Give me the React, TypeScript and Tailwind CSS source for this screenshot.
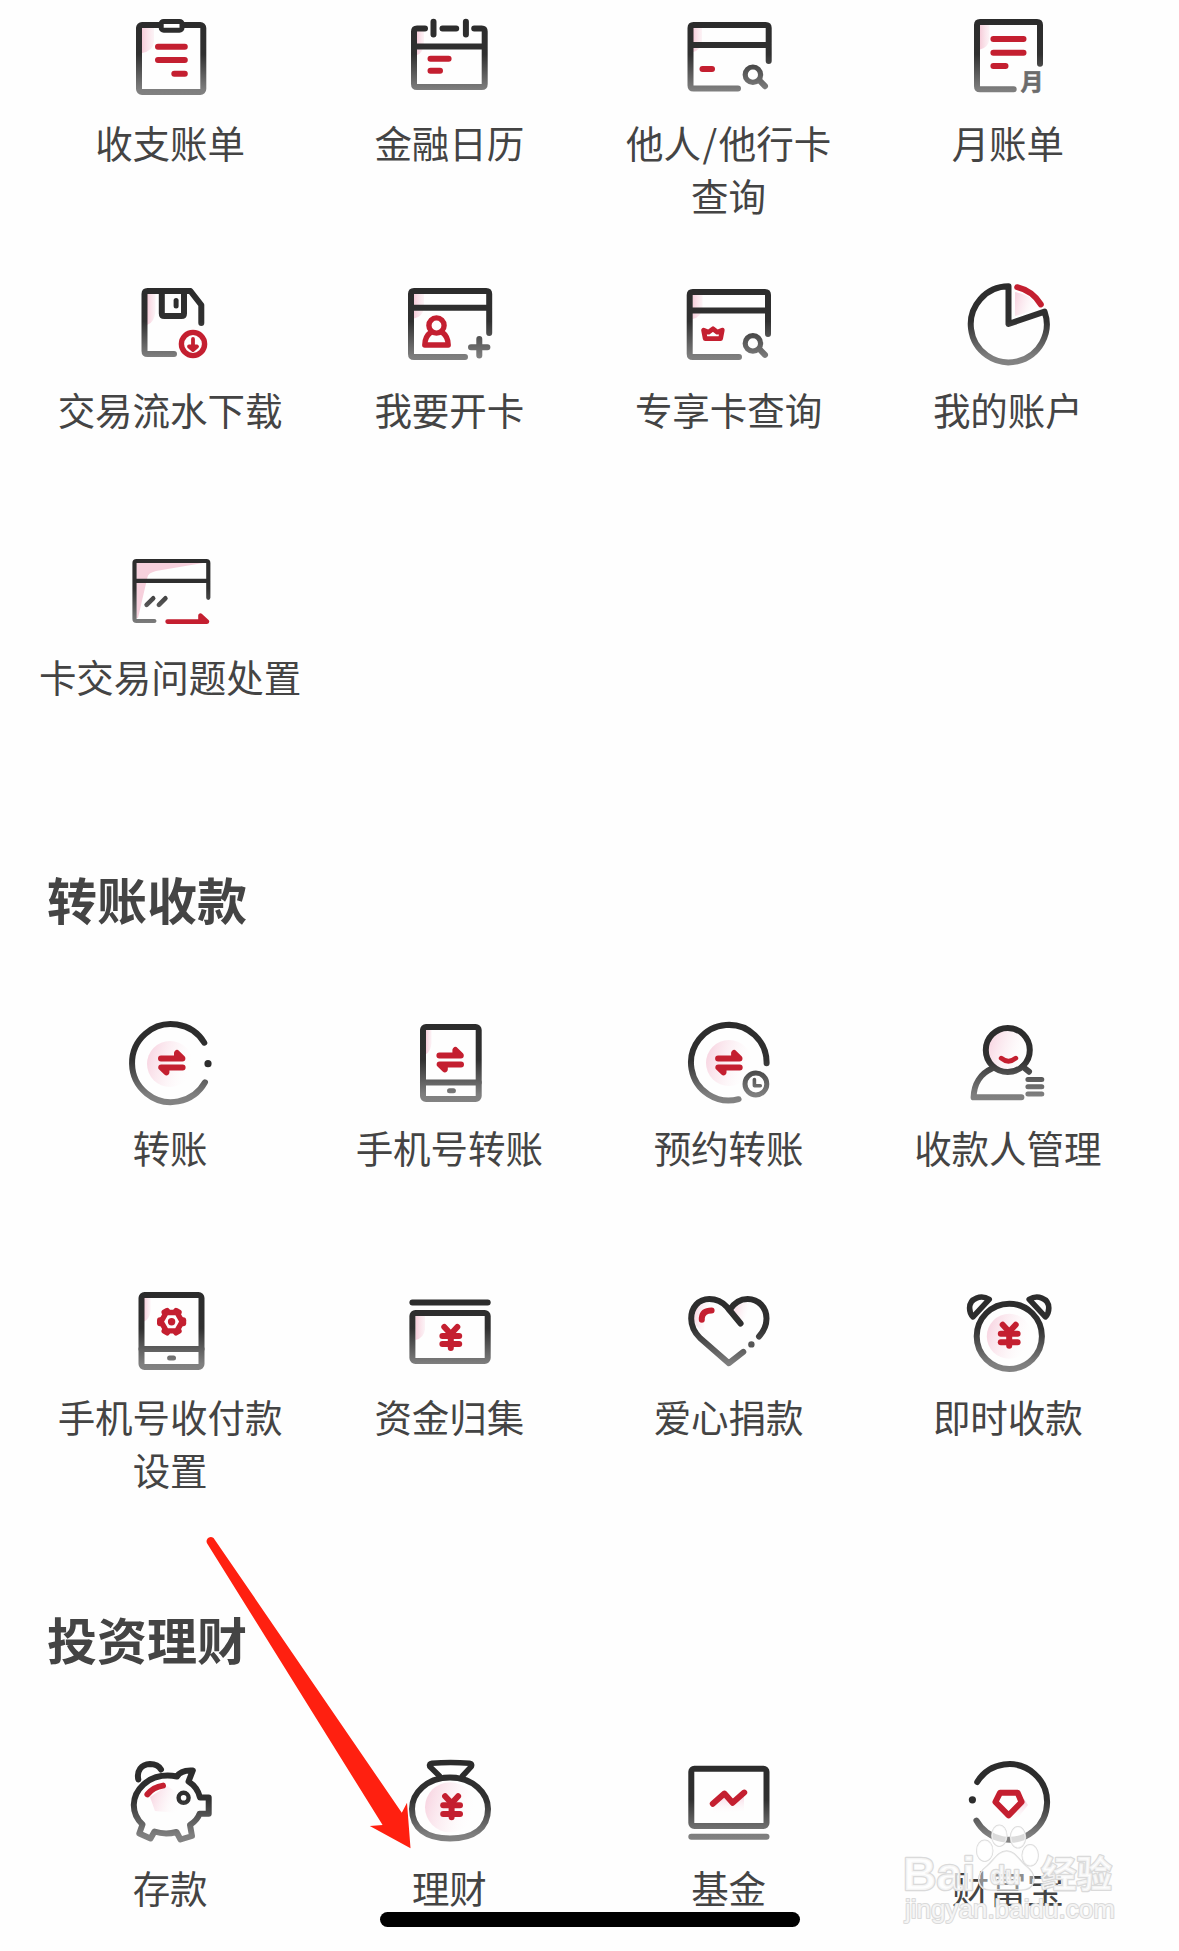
import type { ReactNode } from "react";

const INK = "url(#ink)";
const RED = "#c41f30";

function SharedDefs() {
  return (
    <svg className="absolute h-0 w-0" aria-hidden="true">
      <defs>
        <linearGradient id="ink" gradientUnits="userSpaceOnUse" x1="0" y1="10" x2="0" y2="90">
          <stop offset="0" stopColor="#2b2b2b" />
          <stop offset="0.48" stopColor="#303030" />
          <stop offset="0.92" stopColor="#7e7e7e" />
          <stop offset="1" stopColor="#828282" />
        </linearGradient>
        <linearGradient id="blush" x1="0" y1="0" x2="1" y2="0">
          <stop offset="0" stopColor="#f5c3d3" stopOpacity="0.85" />
          <stop offset="1" stopColor="#f9dde6" stopOpacity="0.35" />
        </linearGradient>
        <linearGradient id="glow" x1="0" y1="0.3" x2="1" y2="0.6">
          <stop offset="0" stopColor="#f3b6cc" stopOpacity="0.58" />
          <stop offset="0.5" stopColor="#f9d5e1" stopOpacity="0.28" />
          <stop offset="1" stopColor="#ffffff" stopOpacity="0" />
        </linearGradient>
        <linearGradient id="drop" x1="0" y1="0" x2="0" y2="1">
          <stop offset="0" stopColor="#f3b6cc" stopOpacity="0.7" />
          <stop offset="1" stopColor="#ffffff" stopOpacity="0" />
        </linearGradient>
      </defs>
    </svg>
  );
}

function Icon({ children, width = 6 }: { children: ReactNode; width?: number }) {
  return (
    <svg
      viewBox="0 0 100 100"
      className="h-[100px] w-[100px] shrink-0"
      fill="none"
      stroke={INK}
      strokeWidth={width}
      strokeLinecap="round"
      strokeLinejoin="round"
    >
      {children}
    </svg>
  );
}

/* Soft pink shade in the upper left corner of a framed icon */
function Corner({ x, y, r, b }: { x: number; y: number; r: number; b: number }) {
  return (
    <path
      d={`M${x} ${y}H${r}V${y + (b - y) * 0.55}Q${r - 1} ${b - 2} ${x} ${b}Z`}
      fill="url(#blush)"
      stroke="none"
    />
  );
}

/* Pair of opposite half arrows */
function Swap({ dx = 0, dy = 0 }: { dx?: number; dy?: number }) {
  return (
    <g transform={`translate(${dx} ${dy})`} stroke={RED} fill={RED}>
      <path d="M40 47.4H61.4L56 42V47.4" />
      <path d="M61.6 56.4H40.2L45.4 61.4V56.4" />
    </g>
  );
}

function Yuan({ dx = 0, dy = 0, gap = 8 }: { dx?: number; dy?: number; gap?: number }) {
  return (
    <g transform={`translate(${dx} ${dy})`} stroke={RED}>
      <path d="M44.3 47L50.8 54L57.3 47M50.8 54V68" />
      <path d="M42.4 56H59.2" />
      <path d={`M42.4 ${56 + gap}H59.2`} />
    </g>
  );
}

function Lens({ dy = 0 }: { dy?: number }) {
  return (
    <g transform={`translate(0 ${dy})`}>
      <circle cx="73.9" cy="68.7" r="7.7" strokeWidth="5.2" />
      <path d="M80.5 74.5L86 80.2" />
    </g>
  );
}

const icons = {
  bill: (
    <Icon>
      <Corner x={21} y={22} r={33} b={47} />
      <rect x="18" y="19" width="64.3" height="67" rx="3" />
      <rect x="40.2" y="15.4" width="20.8" height="8.8" rx="2.5" fill="#fff" strokeWidth="5" />
      <path stroke={RED} d="M37 40.7H63.8M37 54H63.8M53.3 67.7H63.8" />
    </Icon>
  ),
  calendar: (
    <Icon>
      <Corner x={17} y={25} r={24} b={49} />
      <path d="M25 22.4H17Q14 22.4 14 25.4V78Q14 81 17 81H81.7Q84.7 81 84.7 78V25.4Q84.7 22.4 81.7 22.4H74.2M42.5 22.4H56.2M33.5 15.8V28.6M65.9 15.8V28.6M14 40.4H84.7" />
      <path stroke={RED} d="M30.5 52.7H48.6M30.5 64.7H40" />
    </Icon>
  ),
  cardSearch: (
    <Icon>
      <Corner x={14} y={22} r={23} b={46} />
      <path d="M89.7 55V22Q89.7 19 86.7 19H14.5Q11.5 19 11.5 22V79.5Q11.5 82.5 14.5 82.5H59M11.5 39H89.7" />
      <path stroke={RED} d="M23.5 63H33" />
      <Lens />
    </Icon>
  ),
  monthBill: (
    <Icon>
      <Corner x={22} y={19} r={31.5} b={43.5} />
      <path d="M82 57.7V19Q82 16 79 16H22Q19 16 19 19V80.3Q19 83.3 22 83.3H55.7" />
      <path stroke={RED} d="M35.4 33H65.5M35.4 46.7H65.5M35.4 60H47.5" />
      <text
        x="74"
        y="83.8"
        textAnchor="middle"
        fontSize="23"
        fontWeight="700"
        fill="#6c6c6c"
        stroke="#6c6c6c"
        strokeWidth="0.6"
        className="font-['Noto_Sans_CJK_SC',sans-serif]"
      >
        月
      </text>
    </Icon>
  ),
  save: (
    <Icon>
      <Corner x={26} y={21} r={34.5} b={52} />
      <path d="M53 81H26.5Q23.5 81 23.5 78V21Q23.5 18 26.5 18H69.4L80.3 32V50M40.8 18V40.5Q40.8 43 43.3 43H60.5Q63 43 63 40.5V18" />
      <path strokeWidth="5" d="M55.1 27.5V33" />
      <circle cx="72" cy="71" r="11.6" stroke={RED} strokeWidth="5.4" />
      <path stroke={RED} fill={RED} strokeWidth="3.8" d="M72 66V76.5M68 73.5L72 77L76 73.5Z" />
    </Icon>
  ),
  openCard: (
    <Icon>
      <Corner x={14} y={21} r={24} b={45.5} />
      <path d="M89.2 60V21Q89.2 18 86.2 18H14Q11 18 11 21V81Q11 84 14 84H65M11 34.7H89.2" />
      <g stroke={RED} strokeWidth="5.4">
        <circle cx="36.5" cy="52.5" r="7.6" />
        <path d="M30.5 59.5C26.5 62.5 24.8 67 24.8 72H48.2C48.2 67 46.5 62.5 42.5 59.5" />
      </g>
      <path d="M71 74.3H87.4M79.3 66V82.4" />
    </Icon>
  ),
  vipCard: (
    <Icon>
      <Corner x={13.5} y={22} r={23.5} b={46} />
      <path d="M89 61V22Q89 19 86 19H13.7Q10.7 19 10.7 22V81Q10.7 84 13.7 84H60M10.7 37.4H89" />
      <path stroke={RED} strokeWidth="4.8" d="M24.6 57.2L26.2 65.6H41.6L43.2 57.2L38.2 59.2L34 55.8L29.6 59.2Z" />
      <Lens dy={1.7} />
    </Icon>
  ),
  pie: (
    <Icon>
      <path d="M57 19Q72 21 80.5 33Q70 40 57 43Z" fill="url(#glow)" stroke="none" />
      <path d="M50.5 13.3A38 38 0 1 0 86.6 38.7L50.5 51Z" />
      <path stroke={RED} d="M59.2 14.2A38 38 0 0 1 82.8 31.4" />
    </Icon>
  ),
  cardIssue: (
    <Icon width={4.2}>
      <path d="M15.4 23H82L35 31Q27 33 26.5 37L17 78H15.4Z" fill="#f6d0dc" stroke="none" />
      <path d="M87.3 57.8V23Q87.3 21 85.3 21H15.5Q13.5 21 13.5 23V79Q13.5 81 15.5 81H33.4M13.5 40.8H87.3" />
      <path strokeWidth="4.6" d="M25.6 64.8L32.2 58.3M37.9 64.8L44.4 58.3" />
      <path stroke={RED} fill={RED} strokeWidth="4.6" d="M46.6 81.6H86L79.5 75.6V81.6" />
    </Icon>
  ),
  transfer: (
    <Icon>
      <circle cx="49" cy="53" r="23" fill="url(#glow)" stroke="none" />
      <path d="M83.3 31.7A39 39 0 1 0 84 71.3" />
      <circle cx="87" cy="52.7" r="3.6" fill="#2d2d2d" stroke="none" />
      <Swap />
    </Icon>
  ),
  phoneTransfer: (
    <Icon>
      <Corner x={26} y={19} r={31.5} b={43} />
      <rect x="23" y="16" width="55.7" height="72" rx="3" />
      <path d="M23 71.4H78.7" />
      <path strokeWidth="5" d="M49.5 79.7H53.4" />
      <Swap dx={-0.6} dy={-3} />
    </Icon>
  ),
  scheduled: (
    <Icon>
      <circle cx="50" cy="52" r="23" fill="url(#glow)" stroke="none" />
      <path d="M87.6 52.3A37.8 37.8 0 1 0 59.6 88.2" />
      <circle cx="76.9" cy="73" r="10.9" strokeWidth="5" />
      <path strokeWidth="3.6" d="M75.4 68.6V74.7H81.3" />
      <Swap dx={-0.9} />
    </Icon>
  ),
  payee: (
    <Icon>
      <circle cx="49.8" cy="39" r="20" fill="url(#glow)" stroke="none" />
      <circle cx="49.8" cy="39" r="22" />
      <path d="M34 57.5C22.5 62.5 16 73 15.6 86.3H63.4M64.5 55.5L71 60.7" />
      <path stroke={RED} strokeWidth="4.8" d="M43.2 47.2Q50.4 53.2 57.8 47.2" />
      <path strokeWidth="5" d="M69.9 68.4H83.8M69.9 75.7H83.8M69.9 83H83.8" />
    </Icon>
  ),
  phoneSettings: (
    <Icon>
      <Corner x={23} y={18} r={29.5} b={41.5} />
      <rect x="20.5" y="15" width="60" height="72" rx="3" />
      <path d="M20.5 69H80.5" />
      <path strokeWidth="5" d="M48.6 78H52.5" />
      <g fill={RED} stroke="none">
        {[0, 60, 120, 180, 240, 300].map((a) => (
          <rect key={a} x="58.6" y="37.2" width="6.6" height="9" rx="3" transform={`rotate(${a} 50.6 41.7)`} />
        ))}
        <circle cx="50.6" cy="41.7" r="3.7" />
      </g>
      <path stroke={RED} strokeWidth="5.4" d="M55.9 32.5L61.2 41.7L55.9 50.9H45.3L40 41.7L45.3 32.5Z" />
    </Icon>
  ),
  collect: (
    <Icon>
      <Corner x={15.5} y={36} r={25} b={60} />
      <path d="M12.4 22.4H87.7" />
      <rect x="12.4" y="33" width="75.3" height="48" rx="3" />
      <Yuan />
    </Icon>
  ),
  heart: (
    <Icon>
      <path d="M54 31Q60 22 71 22Q70 34 63 42Z" fill="url(#glow)" stroke="none" />
      <path d="M15 38Q16 23 31 22Q26 30 25 52Q15 47 15 38Z" fill="url(#glow)" stroke="none" />
      <path d="M61.6 43.5L48 27C43 21.5 37 19 30.3 19C19.5 19 12.2 27.5 12.2 38.5C12.2 46.5 15.5 52.5 21 58L49.9 83.2L64.3 71.8" />
      <path d="M50.6 30C55 23 61 19 68.7 19C79.5 19 87.5 27.5 87.5 38.5C87.5 45.5 84.5 51.5 80 56.5" />
      <circle cx="72.4" cy="64.4" r="3.2" fill="#565656" stroke="none" />
      <path stroke={RED} d="M22.8 39.8V38Q23.5 30.4 32.6 30.4" />
    </Icon>
  ),
  alarm: (
    <Icon>
      <circle cx="51.3" cy="56.3" r="22.5" fill="url(#glow)" stroke="none" />
      <circle cx="51.3" cy="56.3" r="32.6" />
      <path strokeWidth="5.6" d="M31.2 19.4C23.5 14.5 11.6 17.8 11.6 28C11.6 32 13 35 15 36.8Z" />
      <path strokeWidth="5.6" d="M71.2 19.4C79 14.5 90.8 17.8 90.8 28C90.8 32 89.4 35 87.4 36.8Z" />
      <Yuan dx={0.4} dy={-2.2} gap={8.4} />
    </Icon>
  ),
  pig: (
    <Icon>
      <path d="M29 46L46 35L60 44L56 62L34 60Z" fill="url(#glow)" stroke="none" />
      <path d="M17.3 28.5C15.5 20 20 13.5 29 13C34 13 38 15 40 18.5" />
      <path d="M56 25.5C45 23.5 32 25 22.5 33.5C10 45 9.5 62 21.5 73.5L18.3 82.5L29.5 87.5L33.5 80.5C41 83 48 83 55.5 81L59.5 88.5L71 85L69 74C74 70.5 77 67.5 78.5 62.8H87.7V46.5H79C77.5 40 73 34 67.5 30.5L71.8 19.5C64 19 58.5 21 56 25.5Z" />
      <circle cx="62.6" cy="46.8" r="5" strokeWidth="4.4" />
      <path stroke={RED} d="M26.4 43.4C30 38.8 36 35.4 42 34.6" />
    </Icon>
  ),
  bag: (
    <Icon>
      <circle cx="50" cy="56.3" r="25" fill="url(#glow)" stroke="none" />
      <path d="M50 26.5C73 26.5 88 42 88 58C88 77 74 87.5 50 87.5C26 87.5 12 77 12 58C12 42 27 26.5 50 26.5Z" />
      <path strokeWidth="5.6" d="M39.5 25L29.8 15.4Q29 12.6 32 12.2C44 11.2 57 11.2 69.5 12.2Q72.4 12.6 71.4 15.4L62.5 25" />
      <Yuan dx={0.8} dy={-1.8} gap={8.8} />
    </Icon>
  ),
  fund: (
    <Icon>
      <path d="M34 54L45 45L54 54L65 43V60L34 63Z" fill="url(#drop)" stroke="none" />
      <rect x="12.3" y="17.7" width="75.2" height="57.3" rx="3" />
      <path d="M12.3 85.7H87.5" />
      <path stroke={RED} d="M33.8 52.8L45.4 42.6L53.6 51.8L65.2 41.6" />
    </Icon>
  ),
  gem: (
    <Icon>
      <path d="M66 48L70 54L56 72L50 66Z" fill="url(#drop)" stroke="none" />
      <path d="M19.2 31A37.8 37.8 0 1 1 18.4 69.6" />
      <circle cx="14.4" cy="48.8" r="3.6" fill="#2d2d2d" stroke="none" />
      <path stroke={RED} d="M42 41.8H59.6L63.6 51L50.6 64.4L37.4 51Z" />
    </Icon>
  ),
};

type Entry = { icon: keyof typeof icons; lines: string[] };

const cards: Entry[] = [
  { icon: "bill", lines: ["收支账单"] },
  { icon: "calendar", lines: ["金融日历"] },
  { icon: "cardSearch", lines: ["他人/他行卡", "查询"] },
  { icon: "monthBill", lines: ["月账单"] },
  { icon: "save", lines: ["交易流水下载"] },
  { icon: "openCard", lines: ["我要开卡"] },
  { icon: "vipCard", lines: ["专享卡查询"] },
  { icon: "pie", lines: ["我的账户"] },
  { icon: "cardIssue", lines: ["卡交易问题处置"] },
];

const transfers: Entry[] = [
  { icon: "transfer", lines: ["转账"] },
  { icon: "phoneTransfer", lines: ["手机号转账"] },
  { icon: "scheduled", lines: ["预约转账"] },
  { icon: "payee", lines: ["收款人管理"] },
  { icon: "phoneSettings", lines: ["手机号收付款", "设置"] },
  { icon: "collect", lines: ["资金归集"] },
  { icon: "heart", lines: ["爱心捐款"] },
  { icon: "alarm", lines: ["即时收款"] },
];

const wealth: Entry[] = [
  { icon: "pig", lines: ["存款"] },
  { icon: "bag", lines: ["理财"] },
  { icon: "fund", lines: ["基金"] },
  { icon: "gem", lines: ["财富宝"] },
];

/* A slash between Chinese words gets a little air on both sides */
function Line({ text }: { text: string }) {
  const [head, tail] = text.split("/");
  return (
    <span className="block text-center">
      {head}
      {tail && <span className="px-[1.5px]">/</span>}
      {tail}
    </span>
  );
}

function Grid({ entries }: { entries: Entry[] }) {
  return (
    <div className="grid auto-rows-[267px] grid-cols-4 px-[31px]">
      {entries.map((e) => (
        <button key={e.icon} className="flex flex-col items-center justify-start">
          {icons[e.icon]}
          <span className="mt-[10px] pr-[1px] text-[37.5px] leading-[52.5px] whitespace-nowrap text-[#444]">
            {e.lines.map((l) => (
              <Line key={l} text={l} />
            ))}
          </span>
        </button>
      ))}
    </div>
  );
}

function Heading({ children }: { children: ReactNode }) {
  return (
    <h2 className="mt-[61px] mb-[83px] pl-[47px] text-[50px] leading-[60px] font-bold text-[#444]">{children}</h2>
  );
}

function Watermark() {
  return (
    <svg
      viewBox="0 0 220 110"
      className="absolute top-[1822px] left-[899px] h-[110px] w-[220px] font-['Liberation_Sans','Noto_Sans_CJK_SC',sans-serif]"
      fill="#ffffff"
      fillOpacity="0.72"
      stroke="#dadada"
      strokeWidth="2.6"
      strokeLinejoin="round"
      paintOrder="stroke"
    >
      <g strokeWidth="1.5">
        <ellipse cx="100.3" cy="13.7" rx="7.5" ry="10.5" />
        <ellipse cx="119" cy="15.3" rx="7.5" ry="10.5" />
        <ellipse cx="85.7" cy="28.7" rx="8" ry="10.5" />
        <ellipse cx="131.2" cy="33.3" rx="8" ry="10.5" />
        <path
          fillOpacity="0.4"
          d="M107.7 29C116 29 120 38 127 44C140 54 136 68 122 68H92C78 68 75 54 88 44C95 38 99 29 107.7 29Z"
        />
      </g>
      <text x="4" y="68" fontSize="47" fontWeight="700" textLength="72" lengthAdjust="spacingAndGlyphs">
        Bai
      </text>
      <text x="91" y="61.5" fontSize="26" fontWeight="700" textLength="30" lengthAdjust="spacingAndGlyphs">
        du
      </text>
      <text x="142" y="65.5" fontSize="37" fontWeight="700" textLength="71" lengthAdjust="spacingAndGlyphs">
        经验
      </text>
      <text x="6" y="96" fontSize="25" textLength="210" strokeWidth="2" lengthAdjust="spacingAndGlyphs">
        jingyan.baidu.com
      </text>
    </svg>
  );
}

export default function App() {
  return (
    <main className="relative h-[1951px] w-[1179px] overflow-hidden bg-[#fefefe] pt-[6px] font-['Noto_Sans_CJK_SC',sans-serif]">
      <SharedDefs />
      <Grid entries={cards} />
      <Heading>转账收款</Heading>
      <div className="grid gap-[2px]">
        <Grid entries={transfers.slice(0, 4)} />
        <Grid entries={transfers.slice(4)} />
      </div>
      <Heading>投资理财</Heading>
      <Grid entries={wealth} />

      <svg viewBox="0 0 210 315" className="absolute top-[1536px] left-[204px] h-[315px] w-[210px]">
        <path d="M3 7.2A4.1 4.1 0 0 1 10.6 3.4L197.8 276.7L203 266.7L206.5 312.3L165.8 290L178.6 289Z" fill="#ff2010" />
      </svg>
      <Watermark />
      <div className="absolute top-[1912px] left-[380px] h-[15px] w-[420px] rounded-full bg-black" />
    </main>
  );
}
